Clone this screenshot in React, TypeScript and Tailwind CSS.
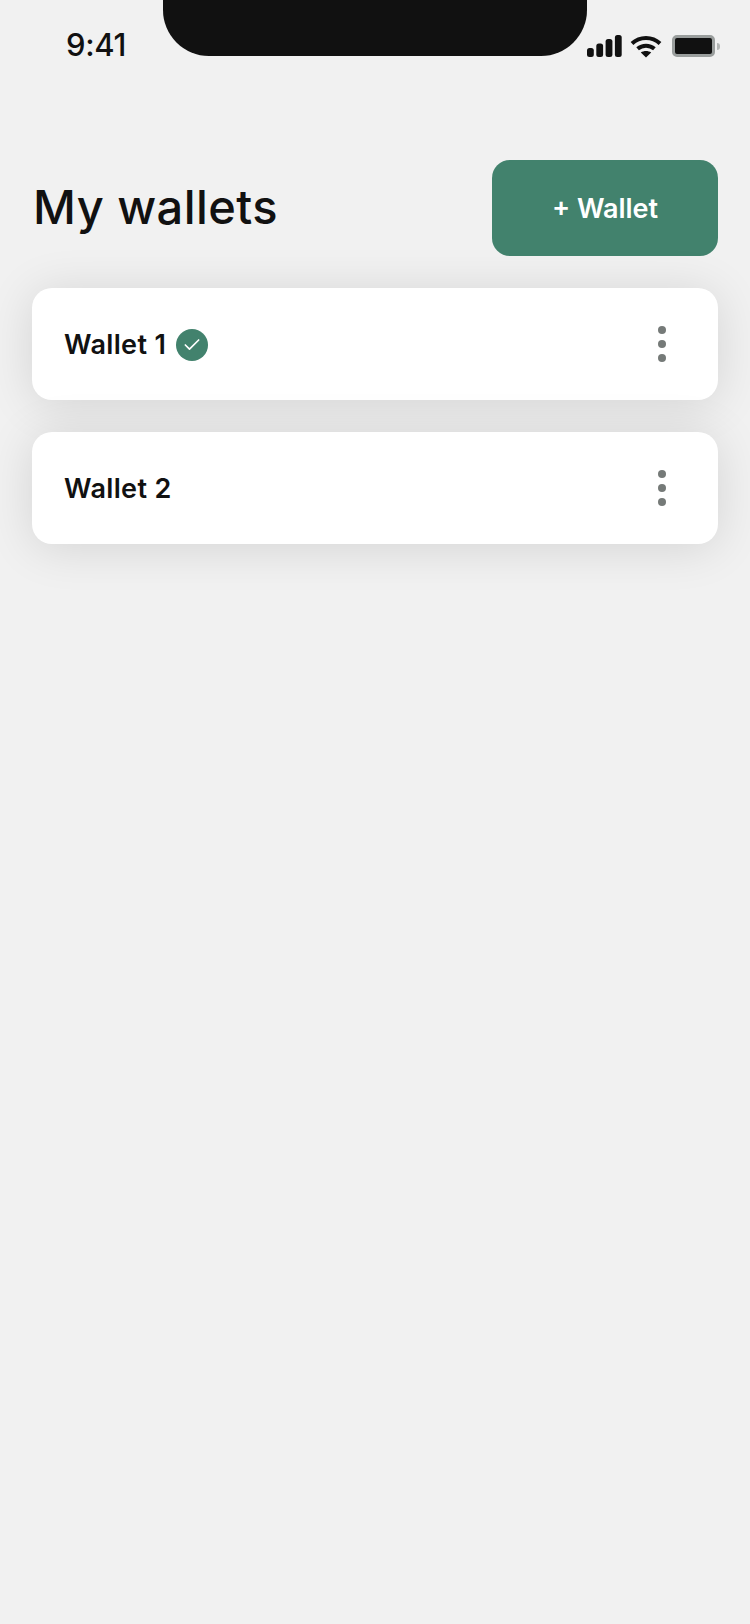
import { Check } from 'lucide-react'

const wallets = [
  { name: 'Wallet 1', active: true },
  { name: 'Wallet 2', active: false },
]

function StatusIcons() {
  return (
    <div className="flex items-center">
      {/* Signal */}
      <svg width="36" height="24" viewBox="0 0 36 24" className="text-[#111111]" fill="currentColor">
        <rect x="0" y="14" width="6.8" height="9" rx="2.5" />
        <rect x="9.3" y="9.5" width="6.8" height="13.5" rx="2.5" />
        <rect x="18.6" y="5" width="6.8" height="18" rx="2.5" />
        <rect x="27.9" y="1" width="6.8" height="22" rx="2.5" />
      </svg>
      {/* Wifi */}
      <svg width="32" height="24" viewBox="0 0 32 24" fill="none" stroke="#111111" strokeWidth="4" className="ml-[7px]">
        <path d="M2 9.5C9.8 2.2 22.2 2.2 30 9.5" />
        <path d="M7.6 14.8c4.8-4.2 12-4.2 16.8 0" />
        <path d="M10.8 18.4 16 23.4l5.2-5c-3-2-7.4-2-10.4 0Z" fill="#111111" stroke="none" />
      </svg>
      {/* Battery */}
      <div className="ml-[10px] flex items-center">
        <div className="w-[43px] h-[22px] rounded-[5px] border-[3px] border-[#9a9e9d] bg-[#111111]" />
        <div className="w-[3px] h-[7px] rounded-r-[4px] bg-[#b4b7b6] ml-[2px]" />
      </div>
    </div>
  )
}

function MoreDots() {
  return (
    <div className="flex flex-col gap-[6px]">
      <span className="w-[8px] h-[8px] rounded-full bg-[#757a78]" />
      <span className="w-[8px] h-[8px] rounded-full bg-[#757a78]" />
      <span className="w-[8px] h-[8px] rounded-full bg-[#757a78]" />
    </div>
  )
}

export default function App() {
  return (
    <div className="w-[750px] h-[1624px] bg-[#f1f1f1] overflow-hidden font-['Inter',sans-serif] text-[#111111]">
      {/* Status bar */}
      <div className="flex h-[56px]">
        <div className="w-[163px] pl-[66px] pt-[25px] text-[31px] leading-[40px] font-medium tracking-[-0.3px]">9:41</div>
        <div className="w-[424px] h-[56px] bg-[#111111] rounded-b-[46px]" />
        <div className="pt-[34px]">
          <StatusIcons />
        </div>
      </div>

      {/* Header */}
      <div className="flex items-center justify-between pl-[33px] pr-[32px] mt-[104px]">
        <h1 className="text-[47px] leading-[96px] font-[450] tracking-[0.45px] mt-[-2px]">My wallets</h1>
        <button className="w-[226px] h-[96px] rounded-[18px] bg-[#42826d] text-white text-[27px] font-semibold pt-[2px]">
          + Wallet
        </button>
      </div>

      {/* Wallets */}
      <div className="flex flex-col gap-[32px] px-[32px] mt-[32px]">
        {wallets.map((w) => (
          <div
            key={w.name}
            className="h-[112px] rounded-[20px] bg-white shadow-[0_4px_48px_rgba(0,0,0,0.12)] flex items-center justify-between pl-[32px] pr-[52px]"
          >
            <div className="flex items-center gap-[10px] pt-[2px]">
              <span className="text-[27px] font-semibold tracking-[0.35px]">{w.name}</span>
              {w.active && (
                <span className="w-[32px] h-[32px] rounded-full bg-[#42826d] flex items-center justify-center">
                  <Check size={20} color="white" strokeWidth={2} />
                </span>
              )}
            </div>
            <MoreDots />
          </div>
        ))}
      </div>
    </div>
  )
}
